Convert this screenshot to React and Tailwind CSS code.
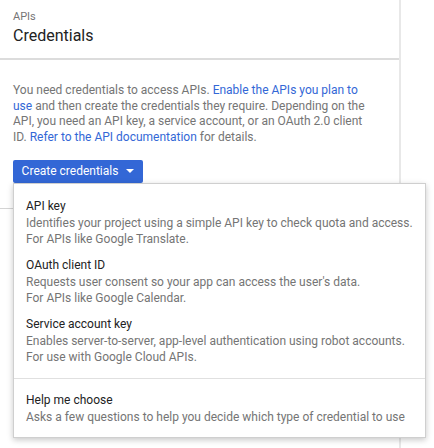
export default function App() {
  const items = [
    {
      title: "API key",
      lines: [
        "Identifies your project using a simple API key to check quota and access.",
        "For APIs like Google Translate.",
      ],
    },
    {
      title: "OAuth client ID",
      lines: [
        "Requests user consent so your app can access the user's data.",
        "For APIs like Google Calendar.",
      ],
    },
    {
      title: "Service account key",
      lines: [
        "Enables server-to-server, app-level authentication using robot accounts.",
        "For use with Google Cloud APIs.",
      ],
    },
  ];

  return (
    <div
      className="relative w-[434px] h-[448px] bg-white overflow-hidden font-normal"
      style={{ fontFamily: "Roboto, 'Liberation Sans', sans-serif" }}
    >
      {/* Page panel */}
      <div className="w-[401px] h-full border-r-2 border-[#e8e8e8]">
        <div className="h-[60px] border-b-2 border-[#dcdcdc] pl-[13px] pt-[10px]">
          <div className="text-[11px] leading-[13px] text-[#757575]">APIs</div>
          <div className="text-[16px] leading-[20px] text-[#222] mt-[3px]">Credentials</div>
        </div>

        <div className="px-[13px] pt-[23px]">
          <p className="text-[12px] leading-[15.7px] text-[#757575] w-[363px]">
            You need credentials to access APIs.{" "}
            <span className="text-[#3367d6]">Enable the APIs you plan to use</span> and then
            create the credentials they require. Depending on the API, you need an API key, a
            service account, or an OAuth 2.0 client ID.{" "}
            <span className="text-[#3367d6]">Refer to the API documentation</span> for details.
          </p>

          <button className="mt-[14px] h-[23px] w-[130px] flex items-center justify-center gap-[8px] bg-[#3367d6] rounded-[2px] text-white text-[12px] font-normal">
            <span>Create credentials</span>
            <svg width="8" height="4" viewBox="0 0 8 4">
              <path d="M0 0h8L4 4z" fill="#ffffff" />
            </svg>
          </button>
        </div>

        <div className="mt-[25px] w-[13px] border-b border-[#d4d4d4]" />
      </div>

      {/* Dropdown menu */}
      <div className="absolute left-[13px] top-[183px] w-[413px] bg-white border border-[#cfcfcf] shadow-[0_2px_6px_rgba(0,0,0,0.22)]">
        <div className="pt-[14px] pb-[3px]">
          {items.map((it) => (
            <div key={it.title} className="pl-[12px] pb-[10px]">
              <div className="text-[12px] leading-[17px] text-[#222]">{it.title}</div>
              {it.lines.map((l) => (
                <div key={l} className="text-[12px] leading-[16px] text-[#757575]">
                  {l}
                </div>
              ))}
            </div>
          ))}
        </div>
        <div className="border-t border-[#e0e0e0] pl-[12px] pt-[13px] pb-[12px]">
          <div className="text-[12px] leading-[17px] text-[#222]">Help me choose</div>
          <div className="text-[12px] leading-[16px] text-[#757575]">
            Asks a few questions to help you decide which type of credential to use
          </div>
        </div>
      </div>
    </div>
  );
}
